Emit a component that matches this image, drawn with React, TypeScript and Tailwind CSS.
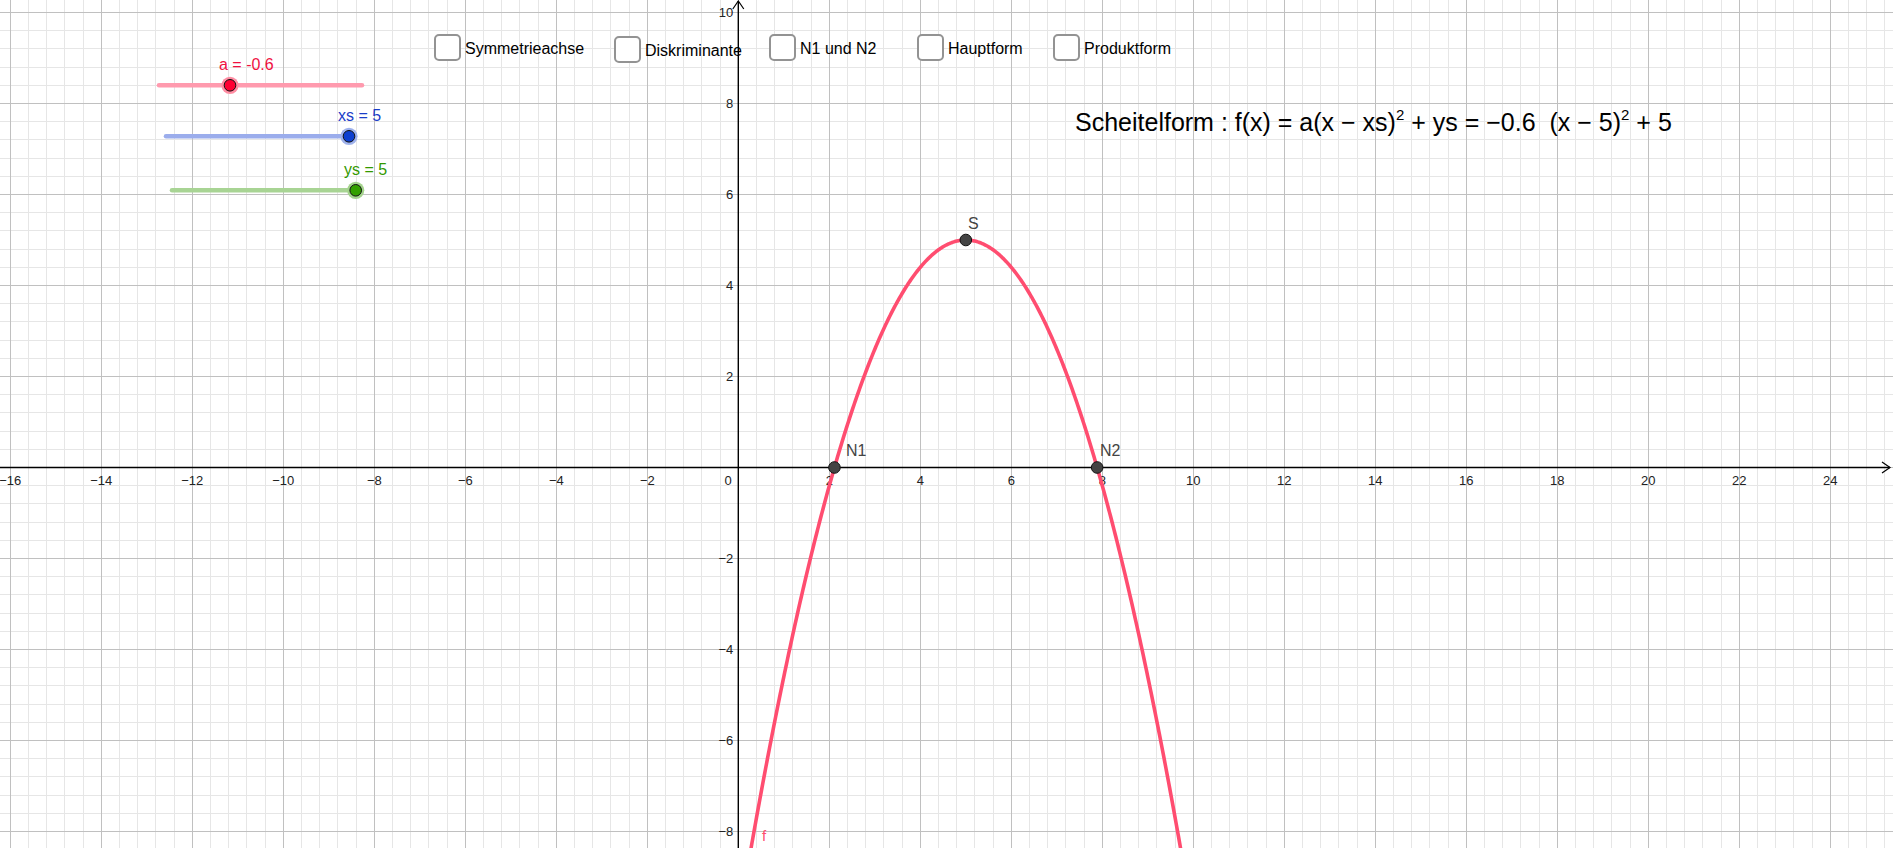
import React from 'react'

const W = 1893
const H = 848
const U = 45.5
const OX = 738.3
const OY = 467.5

const px = (x: number) => OX + x * U
const py = (y: number) => OY - y * U

const f = (x: number) => -0.6 * (x - 5) * (x - 5) + 5

const font = '"Liberation Sans", Arial, sans-serif'

function minus(n: number) {
  return n < 0 ? '\u2212' + Math.abs(n) : String(n)
}

function Grid() {
  const vMinor: number[] = []
  const vMajor: number[] = []
  for (let n = -41; n <= 64; n++) {
    const x = px(n * 0.4)
    if (n % 5 === 0) vMajor.push(x)
    else vMinor.push(x)
  }
  const hMinor: number[] = []
  const hMajor: number[] = []
  for (let n = -22; n <= 27; n++) {
    const y = py(n * 0.4)
    if (n % 5 === 0) hMajor.push(y)
    else hMinor.push(y)
  }
  return (
    <g shapeRendering="crispEdges">
      {vMinor.map((x) => (
        <line key={'vm' + x} x1={x} y1={0} x2={x} y2={H} stroke="#e6e6e6" strokeWidth={1} />
      ))}
      {hMinor.map((y) => (
        <line key={'hm' + y} x1={0} y1={y} x2={W} y2={y} stroke="#e6e6e6" strokeWidth={1} />
      ))}
      {vMajor.map((x) => (
        <line key={'vM' + x} x1={x} y1={0} x2={x} y2={H} stroke="#c0c0c0" strokeWidth={1} />
      ))}
      {hMajor.map((y) => (
        <line key={'hM' + y} x1={0} y1={y} x2={W} y2={y} stroke="#c0c0c0" strokeWidth={1} />
      ))}
    </g>
  )
}

function Axes() {
  const xTicks: number[] = []
  for (let v = -16; v <= 24; v += 2) if (v !== 0) xTicks.push(v)
  const yTicks = [10, 8, 6, 4, 2, -2, -4, -6, -8]
  return (
    <g>
      <line x1={0} y1={OY} x2={W - 3} y2={OY} stroke="#000" strokeWidth={1.4} />
      <polyline points={`${W - 11},${OY - 5.5} ${W - 3},${OY} ${W - 11},${OY + 5.5}`} fill="none" stroke="#000" strokeWidth={1.2} />
      <line x1={OX} y1={H} x2={OX} y2={1} stroke="#000" strokeWidth={1.4} />
      <polyline points={`${OX - 5.5},9 ${OX},1 ${OX + 5.5},9`} fill="none" stroke="#000" strokeWidth={1.2} />
      <g fontFamily={font} fontSize={13} fill="#222">
        {xTicks.map((v) => (
          <text key={'x' + v} x={px(v)} y={480} textAnchor="middle" dominantBaseline="central">
            {minus(v)}
          </text>
        ))}
        <text x={728} y={480} textAnchor="middle" dominantBaseline="central">0</text>
        {yTicks.map((v) => (
          <text key={'y' + v} x={OX - 5} y={py(v)} textAnchor="end" dominantBaseline="central">
            {minus(v)}
          </text>
        ))}
      </g>
    </g>
  )
}

function Parabola() {
  const pts: string[] = []
  for (let x = 0.1; x <= 9.9; x += 0.02) {
    pts.push(`${px(x).toFixed(2)},${py(f(x)).toFixed(2)}`)
  }
  const r = Math.sqrt(25 / 3)
  return (
    <g>
      <polyline points={pts.join(' ')} fill="none" stroke="#ff4d70" strokeWidth={3.6} strokeLinejoin="round" />
      <text x={762} y={835} fontFamily={font} fontSize={15} fill="#ff4d70" dominantBaseline="central">f</text>
      {[
        { x: 5, y: 5, label: 'S', lx: 968, ly: 223 },
        { x: 5 - r, y: 0, label: 'N1', lx: 846, ly: 450 },
        { x: 5 + r, y: 0, label: 'N2', lx: 1100, ly: 450 },
      ].map((p) => (
        <g key={p.label}>
          <circle cx={px(p.x)} cy={py(p.y)} r={5.8} fill="#444" stroke="#111" strokeWidth={1} />
          <text x={p.lx} y={p.ly} fontFamily={font} fontSize={16} fill="#444" dominantBaseline="central">
            {p.label}
          </text>
        </g>
      ))}
    </g>
  )
}

const sliders = [
  { x1: 159, x2: 362, y: 85.3, pt: 230, label: 'a = -0.6', lx: 219, ly: 64, line: '#ff9aae', halo: '#ff8da3', fill: '#ff0033', text: '#f0103f' },
  { x1: 166, x2: 349, y: 136.3, pt: 349, label: 'xs = 5', lx: 338, ly: 115.7, line: '#9badec', halo: '#9fb2ec', fill: '#0d3fd0', text: '#1a3dc8' },
  { x1: 172, x2: 356, y: 190.3, pt: 355.7, label: 'ys = 5', lx: 344, ly: 169, line: '#a8d494', halo: '#a4d38d', fill: '#33a000', text: '#339900' },
]

function Sliders() {
  return (
    <g>
      {sliders.map((s) => (
        <g key={s.label}>
          <line x1={s.x1} y1={s.y} x2={s.x2} y2={s.y} stroke={s.line} strokeWidth={4.5} strokeLinecap="round" />
          <circle cx={s.pt} cy={s.y} r={8.6} fill={s.halo} />
          <circle cx={s.pt} cy={s.y} r={5.8} fill={s.fill} stroke="#111" strokeWidth={1} />
          <text x={s.lx} y={s.ly} fontFamily={font} fontSize={16} fill={s.text} dominantBaseline="central">
            {s.label}
          </text>
        </g>
      ))}
    </g>
  )
}

// GeoGebra checkboxes sit at free positions on the canvas
function Check({ label, className }: { label: string; className: string }) {
  return (
    <div className={'absolute flex items-center ' + className}>
      <div className="h-[27px] w-[27px] rounded-[5px] border-2 border-[#939393] bg-white" />
      <span className="ml-[4px] pt-[2px] text-[16px] leading-none text-black">{label}</span>
    </div>
  )
}

export default function App() {
  return (
    <div
      className="relative h-[848px] w-[1893px] overflow-hidden bg-white"
      style={{ fontFamily: font }}
    >
      <svg width={W} height={H} className="absolute left-0 top-0 block">
        <Grid />
        <Axes />
        <Parabola />
        <Sliders />
      </svg>

      <Check label="Symmetrieachse" className="left-[434px] top-[34px]" />
      <Check label="Diskriminante" className="left-[614px] top-[36px]" />
      <Check label="N1 und N2" className="left-[769px] top-[34px]" />
      <Check label="Hauptform" className="left-[917px] top-[34px]" />
      <Check label="Produktform" className="left-[1053px] top-[34px]" />

      <div className="absolute left-[1075px] top-[110px] whitespace-nowrap text-[25px] leading-none text-black">
        Scheitelform : f(x) = a(x − xs)
        <span className="relative -top-[11px] text-[15px]">2</span> + ys = −0.6&nbsp; (x − 5)
        <span className="relative -top-[11px] text-[15px]">2</span> + 5
      </div>
    </div>
  )
}
